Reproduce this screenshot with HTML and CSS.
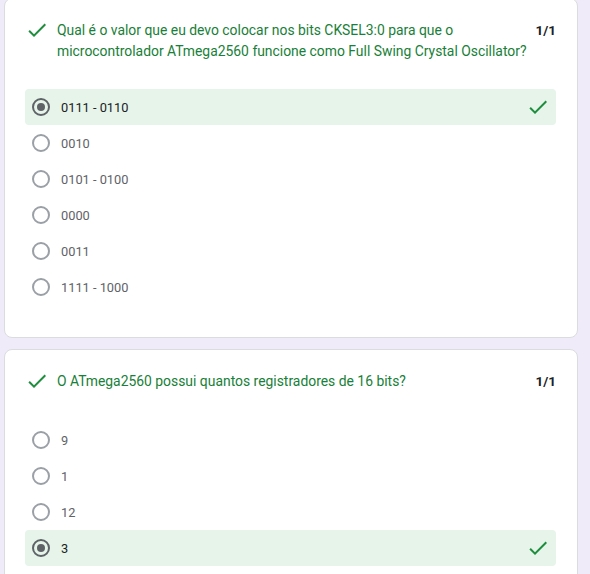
FILE: index.html
```html
<!DOCTYPE html>
<html lang="pt">
<head>
<meta charset="utf-8">
<link rel="stylesheet" href="styles.css">
</head>
<body>
<div class="list">
  <section class="card">
    <div class="header">
      <svg class="icon" viewBox="0 0 24 24"><path d="M9 16.17L4.83 12l-1.42 1.41L9 19 21 7l-1.41-1.41z"/></svg>
      <div class="question">Qual é o valor que eu devo colocar nos bits CKSEL3:0 para que o microcontrolador ATmega2560 funcione como Full Swing Crystal Oscillator?</div>
      <div class="score">1/1</div>
    </div>
    <div class="options">
      <div class="option selected"><span class="radio"></span><span class="label">0111 - 0110</span><svg class="icon mark" viewBox="0 0 24 24"><path d="M9 16.17L4.83 12l-1.42 1.41L9 19 21 7l-1.41-1.41z"/></svg></div>
      <div class="option"><span class="radio"></span><span class="label">0010</span></div>
      <div class="option"><span class="radio"></span><span class="label">0101 - 0100</span></div>
      <div class="option"><span class="radio"></span><span class="label">0000</span></div>
      <div class="option"><span class="radio"></span><span class="label">0011</span></div>
      <div class="option"><span class="radio"></span><span class="label">1111 - 1000</span></div>
    </div>
  </section>
  <section class="card">
    <div class="header header-single">
      <svg class="icon" viewBox="0 0 24 24"><path d="M9 16.17L4.83 12l-1.42 1.41L9 19 21 7l-1.41-1.41z"/></svg>
      <div class="question">O ATmega2560 possui quantos registradores de 16 bits?</div>
      <div class="score">1/1</div>
    </div>
    <div class="options">
      <div class="option"><span class="radio"></span><span class="label">9</span></div>
      <div class="option"><span class="radio"></span><span class="label">1</span></div>
      <div class="option"><span class="radio"></span><span class="label">12</span></div>
      <div class="option selected"><span class="radio"></span><span class="label">3</span><svg class="icon mark" viewBox="0 0 24 24"><path d="M9 16.17L4.83 12l-1.42 1.41L9 19 21 7l-1.41-1.41z"/></svg></div>
    </div>
  </section>
</div>
</body>
</html>
```
FILE: styles.css
```css
html, body {
  margin: 0;
  padding: 0;
  background: #f0ebf8;
  font-family: Roboto, "Liberation Sans", Arial, sans-serif;
}
.list {
  width: 574px;
  margin: -2px 0 0 4px;
  display: flex;
  flex-direction: column;
  gap: 11px;
}
.card {
  background: #fff;
  border: 1px solid #dadce0;
  border-radius: 8px;
  padding: 21px 21px 32px 20px;
  box-sizing: border-box;
}
.header {
  display: flex;
  align-items: flex-start;
  margin-bottom: 27px;
}
.header-single {
  margin-bottom: 29px;
}
.icon {
  width: 24px;
  height: 24px;
  flex: none;
  fill: #1e8e3e;
}
.header .icon {
  margin-top: -2px;
}
.question {
  flex: 1;
  margin-left: 8px;
  font-size: 13.9px;
  line-height: 21px;
  color: #188038;
  padding-right: 2px;
}
.score {
  font-size: 13.5px;
  line-height: 21px;
  font-weight: 700;
  color: #202124;
}
.options {
  display: flex;
  flex-direction: column;
}
.option {
  display: flex;
  align-items: center;
  height: 36px;
  padding: 0 6px 0 7px;
  border-radius: 4px;
}
.option.selected {
  background: #e6f4ea;
}
.radio {
  width: 18px;
  height: 18px;
  box-sizing: border-box;
  border: 2px solid #9aa0a6;
  border-radius: 50%;
  flex: none;
  display: flex;
  align-items: center;
  justify-content: center;
}
.selected .radio {
  border-color: #5f6368;
}
.selected .radio::after {
  content: "";
  width: 8px;
  height: 8px;
  border-radius: 50%;
  background: #5f6368;
}
.label {
  flex: 1;
  margin-left: 11px;
  font-size: 12.8px;
  color: #5f6368;
}
.selected .label {
  color: #202124;
}
.mark {
  fill: #1e8e3e;
}
```
